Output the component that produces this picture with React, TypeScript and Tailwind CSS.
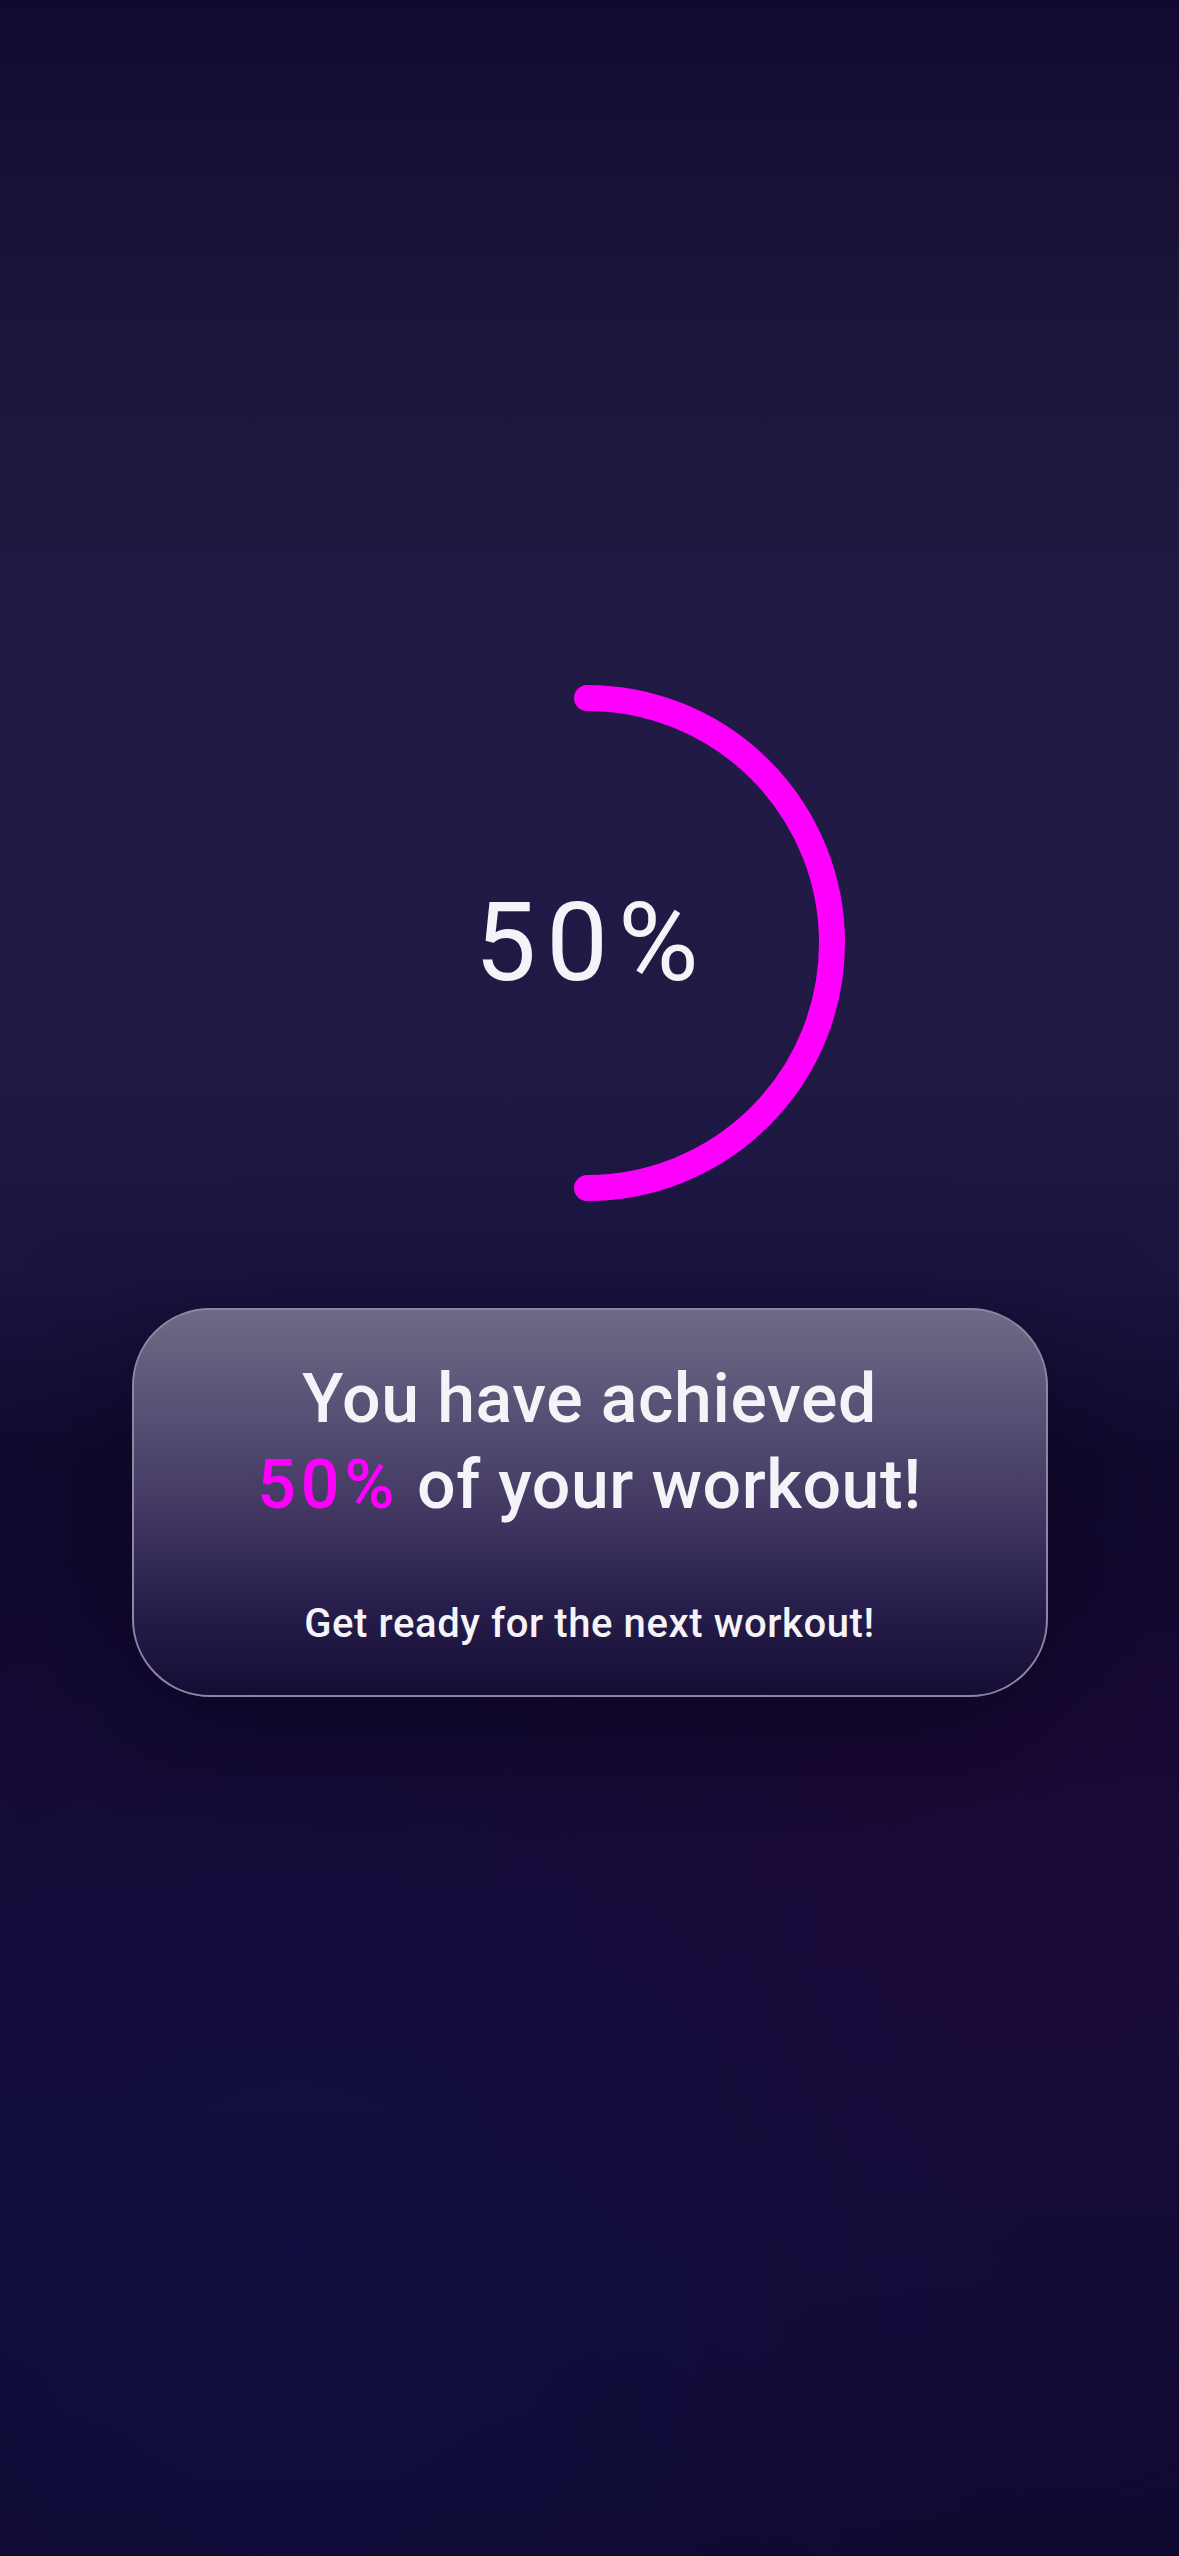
import React from "react";

const percent = 50;

function ProgressArc() {
  // half ring, drawn from the top round the right side to the bottom
  return (
    <div className="relative w-[540px] h-[540px]">
      <svg width="540" height="540" viewBox="0 0 540 540" className="block">
        <path
          d="M267 25 A245 245 0 0 1 267 515"
          fill="none"
          stroke="#ff00ff"
          strokeWidth="26"
          strokeLinecap="round"
        />
      </svg>
      <div className="absolute inset-0 flex items-center justify-center">
        <span className="font-['Roboto',sans-serif] text-[110px] leading-none font-normal tracking-[10px] text-[#f4f3f7] ml-[4px]">
          {percent}%
        </span>
      </div>
    </div>
  );
}

export default function App() {
  return (
    <div className="relative w-[1179px] h-[2556px] overflow-hidden bg-[linear-gradient(180deg,#120933_0%,#1a1339_10%,#1f1841_20%,#211a46_30%,#1f1944_42%,#1a1440_50%,#110a2f_57%,#120930_62%,#170a36_70%,#140b38_80%,#0f0b36_90%,#0f0932_100%)]">
      <div className="absolute inset-0 bg-[radial-gradient(circle_at_25%_88%,rgba(16,18,70,0.5)_0%,rgba(16,18,70,0)_30%),radial-gradient(circle_at_85%_78%,rgba(40,8,60,0.3)_0%,rgba(40,8,60,0)_28%)]" />
      <div className="relative flex flex-col items-center pt-[673px]">
        <ProgressArc />

        <div className="mt-[95px] w-[916px] h-[389px] rounded-[78px] border-2 border-[#8d86a3] bg-[linear-gradient(180deg,#6f6a86_0%,#5a5276_25%,#3f3560_55%,#241b48_80%,#160d36_100%)] shadow-[0_40px_140px_rgba(5,0,20,0.55)] flex flex-col items-center pt-[46px]">
          <h1 className="font-['Roboto',sans-serif] font-medium text-[68px] leading-[86px] tracking-[0.6px] text-[#f4f3f7] text-center">
            You have achieved
            <br />
            <span className="text-[#ff00ff] tracking-[5px]">{percent}%</span> of your workout!
          </h1>
          <p className="mt-[76px] font-['Roboto',sans-serif] font-medium text-[40px] leading-none tracking-[0.6px] text-[#f4f3f7]">
            Get ready for the next workout!
          </p>
        </div>
      </div>
    </div>
  );
}
